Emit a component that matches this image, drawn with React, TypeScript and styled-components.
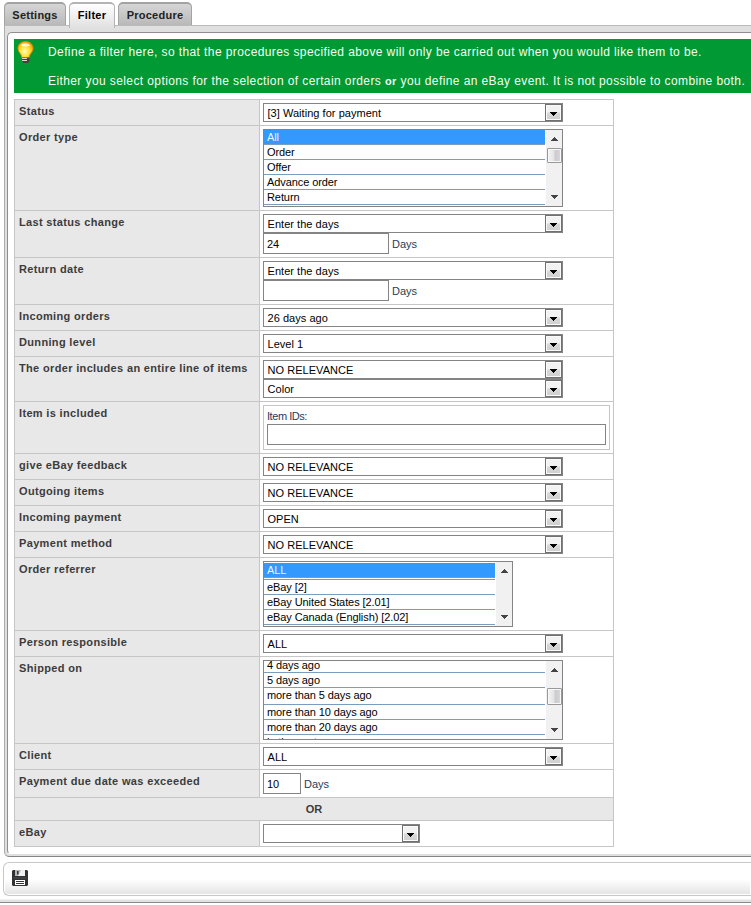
import React from "react";
import styled, { createGlobalStyle, css } from "styled-components";

const GlobalStyle = createGlobalStyle`
  *, *::before, *::after { box-sizing: border-box; }
  html, body { margin: 0; background: #fff; overflow: hidden; }
  body { font-family: "Liberation Sans", Arial, sans-serif; font-size: 11px; line-height: 14px; color: #000; }
`;

const Page = styled.div`
  width: 100vw;
  height: 905px;
  overflow: hidden;
  display: flex;
  flex-direction: column;
`;

const TabBar = styled.nav`
  display: flex;
  align-items: flex-start;
  height: 25px;
  padding: 2px 0 0 4px;
  gap: 3px;
`;

const Tab = styled.button<{ $width: number; $active?: boolean }>`
  display: flex;
  align-items: flex-start;
  justify-content: center;
  width: ${(p) => p.$width}px;
  height: 24px;
  flex: none;
  padding: 4px 0 0;
  border: 1px solid #a3a3a3;
  border-width: 2px 1px 1px;
  border-radius: 5px 5px 0 0;
  background: linear-gradient(#d6d6d6, #b9b9b9);
  font: bold 11px/14px "Liberation Sans", Arial, sans-serif;
  letter-spacing: 0.25px;
  color: #222;
  ${(p) =>
    p.$active &&
    css`
      height: 26px;
      z-index: 1;
      border-color: #b4b4b4;
      border-bottom: 0;
      background: linear-gradient(#ffffff, #e0e0e0);
      color: #000;
    `}
`;

const Frame = styled.main`
  height: 832px;
  flex: none;
  margin-left: 4px;
  padding: 6px 0 3px 2px;
  border: 1px solid #adadad;
  border-top-color: #bbb;
  border-bottom-color: #858585;
  border-right: 0;
  border-radius: 0 0 0 5px;
  background: #e0e0e0;
`;

const Panel = styled.div`
  height: 822px;
  padding: 6px 0 0 6px;
  border: 1px solid #8e8e8e;
  border-right: 0;
  border-bottom-color: #fff;
  border-radius: 5px 0 0 4px;
  background: #fff;
`;

const Hint = styled.section`
  display: flex;
  height: 54px;
  margin-bottom: 6px;
  padding-left: 3px;
  background: #093;
  color: #f2fff2;
  overflow: hidden;

  svg { flex: none; margin-top: 2px; }
`;

const HintText = styled.div`
  display: flex;
  flex-direction: column;
  gap: 15px;
  margin-left: 14px;
  padding-top: 6px;
  font-size: 12px;
  letter-spacing: 0.4px;
  white-space: nowrap;

  p { margin: 0; height: 14px; }
  b { font-size: 11px; }
`;

const Table = styled.div`
  width: 600px;
  border: 1px solid #c6c6c6;
  border-top: 0;
`;

const Row = styled.div`
  display: grid;
  grid-template-columns: 245px 1fr;
  border-top: 1px solid #c6c6c6;
`;

const Label = styled.div`
  padding: 4px 0 0 4px;
  border-right: 1px solid #c6c6c6;
  background: #e8e8e8;
  color: #3c3c3c;
  font-weight: bold;
  letter-spacing: 0.34px;
  white-space: nowrap;
`;

const Field = styled.div`
  display: flex;
  flex-direction: column;
  align-items: flex-start;
  padding: 3px;
`;

const Divider = styled.div`
  height: 23px;
  padding-top: 4px;
  border-top: 1px solid #c6c6c6;
  background: #e8e8e8;
  color: #3c3c3c;
  font-weight: bold;
  text-align: center;
`;

const SelectBox = styled.div<{ $width: number }>`
  display: flex;
  justify-content: space-between;
  width: ${(p) => p.$width}px;
  height: 19px;
  border: 1px solid #848484;
  background: #fff;
`;

const SelectValue = styled.span`
  padding-left: 3.5px;
  line-height: 18px;
  letter-spacing: 0.04px;
  white-space: nowrap;
`;

const SelectButton = styled.span`
  display: flex;
  align-items: center;
  justify-content: center;
  width: 17px;
  height: 17px;
  border: 1px solid #707070;
  box-shadow: inset 0 0 0 1px #fafafa;
  background: linear-gradient(#f2f2f2 45%, #d8d8d8 55%, #cfcfcf);

  svg { margin-top: 2px; }
`;

const ListBox = styled.div<{ $width: number; $height: number }>`
  display: flex;
  width: ${(p) => p.$width}px;
  height: ${(p) => p.$height}px;
  border: 1px solid #848484;
  overflow: hidden;
`;

const Options = styled.div<{ $shift: number }>`
  flex: 1;
  margin-top: ${(p) => p.$shift}px;
`;

const Option = styled.div<{ $selected?: boolean; $extra?: boolean; $tall?: boolean }>`
  height: ${(p) => (p.$tall ? 17 : 15)}px;
  padding-left: 3px;
  border-bottom: 1px solid #7c9cbc;
  letter-spacing: -0.09px;
  white-space: nowrap;
  ${(p) => p.$selected && css`background: #39f; color: #e8f4ff;`}
  ${(p) => p.$extra && css`box-shadow: 0 1px #fff, 0 2px #7c9cbc; margin-bottom: 2px;`}
`;

const ScrollBar = styled.div<{ $before: number }>`
  display: flex;
  flex-direction: column;
  align-items: center;
  width: 17px;
  padding: 7px 0 7px 1px;
  border-left: 1px solid #fff;
  background: #f1f1f1;

  svg:first-child { margin-bottom: ${(p) => p.$before}px; }
  svg:last-child { margin-top: auto; }
`;

const Thumb = styled.div<{ $height: number }>`
  width: 15px;
  height: ${(p) => p.$height}px;
  border: 1px solid #999;
  border-radius: 1px;
  box-shadow: inset 0 0 0 1px #f8f8f8;
  background: linear-gradient(90deg, #f4f4f4, #e4e4e4 45%, #cbcbcf 55%, #d8d8dc);
`;

const InputLine = styled.div`
  display: flex;
  align-items: center;
  gap: 3px;
  color: #24405a;
`;

const TextInput = styled.input<{ $width: number }>`
  width: ${(p) => p.$width}px;
  height: 21px;
  padding: 1px 0 0 3px;
  border: 1px solid #848484;
  border-radius: 0;
  outline: 0;
  background: #fff;
  color: #000;
  font: 11px "Liberation Sans", Arial, sans-serif;
`;

const ItemGroup = styled.div`
  width: 347px;
  height: 45px;
  padding: 3px 3px 0;
  border: 1px solid #c6c6c6;
  color: #24405a;
`;

const Caption = styled.div`
  height: 15px;
  letter-spacing: -0.45px;
`;

const Footer = styled.footer`
  display: flex;
  align-items: flex-start;
  flex: none;
  height: 34px;
  margin: 5px 0 3px 3px;
  padding: 7px 0 0 8px;
  border: 1px solid #c8c8c8;
  border-right: 0;
  border-radius: 6px 0 0 6px;
  background: linear-gradient(#fff 50%, #e3e3e3);
  box-shadow: inset 0 0 0 1px #fff;
`;

const BottomRule = styled.div`
  height: 4px;
  flex: none;
  border-top: 1px solid #f0f0f0;
  border-bottom: 1px solid #8a8a8a;
  background: #e2e2e2;
`;

const Arrow = ({ up, light }: { up?: boolean; light?: boolean }) => (
  <svg width="7" height="4" viewBox="0 0 7 4" shapeRendering="crispEdges">
    {up ? (
      <path d="M3 0h1v1h1v1h1v1h1v1H0V3h1V2h1V1h1z" fill="#444" />
    ) : (
      <path d="M0 0h7v1H6v1H5v1H4v1H3V3H2V2H1V1H0z" fill={light ? "#444" : "#000"} />
    )}
  </svg>
);

const Bulb = () => (
  <svg width="17" height="23" viewBox="0 0 17 23">
    <defs>
      <radialGradient id="glow" cx="45%" cy="60%" r="62%">
        <stop offset="0" stopColor="#fffbc0" />
        <stop offset=".5" stopColor="#ffe23a" />
        <stop offset="1" stopColor="#f79a08" />
      </radialGradient>
    </defs>
    <path d="M8.5.5C3.8.5 1 3.5 1 7.5c0 3.800 3.600 5 4 9.500h7c.4-4.500 4-5.700 4-9.500C16 3.500 13.200.5 8.500.5z" fill="url(#glow)" stroke="#e98605" strokeWidth=".8" />
    <path d="M4 4.500C5 2.200 11 1.800 13 4.500c-2 1.200-7 1.200-9 0z" fill="#fff" opacity=".85" />
    <path d="M5 16.500h7.500v3.500l-1.500 2H6.500L5 20z" fill="#4b3f3a" />
    <path d="M5 17.500h5M5 19.500h5" stroke="#ddd8d4" strokeWidth="1" />
  </svg>
);

const SaveIcon = () => (
  <svg width="16" height="16" viewBox="0 0 16 16">
    <path d="M1 0h14l1 1v14l-1 1H1l-1-1V1z" fill="#303234" />
    <path d="M3 0h10v6H3z" fill="#b4b7b9" />
    <path d="M9 0h4v6H6z" fill="#f0f0f0" />
    <path d="M5 1h1.500v3.500H5z" fill="#303234" />
    <path d="M3 10h10v5H3z" fill="#fff" />
    <path d="M4 11h8v1H4zM4 13h8v1H4z" fill="#303234" />
    <path d="M1.500 8h13" stroke="#4a4d4f" />
  </svg>
);

const Select = ({ value = "", width = 300 }: { value?: string; width?: number }) => (
  <SelectBox $width={width}>
    <SelectValue>{value}</SelectValue>
    <SelectButton><Arrow /></SelectButton>
  </SelectBox>
);

type Item = { text: string; selected?: boolean; extra?: boolean; tall?: boolean };

const List = ({ items, width, height, shift = 0, before = 0, thumb }: {
  items: Item[]; width: number; height: number; shift?: number; before?: number; thumb?: number;
}) => (
  <ListBox $width={width} $height={height}>
    <Options $shift={shift}>
      {items.map((i) => (
        <Option key={i.text} $selected={i.selected} $extra={i.extra} $tall={i.tall}>{i.text}</Option>
      ))}
    </Options>
    <ScrollBar $before={before}>
      <Arrow up />
      {thumb && <Thumb $height={thumb} />}
      <Arrow light />
    </ScrollBar>
  </ListBox>
);

const FormRow = ({ label, children }: { label: string; children: React.ReactNode }) => (
  <Row>
    <Label>{label}</Label>
    <Field>{children}</Field>
  </Row>
);

export default function App() {
  return (
    <Page>
      <GlobalStyle />
      <TabBar>
        <Tab $width={62}>Settings</Tab>
        <Tab $width={46} $active>Filter</Tab>
        <Tab $width={74}>Procedure</Tab>
      </TabBar>
      <Frame>
        <Panel>
          <Hint>
            <Bulb />
            <HintText>
              <p>Define a filter here, so that the procedures specified above will only be carried out when you would like them to be.</p>
              <p>Either you select options for the selection of certain orders <b>or</b> you define an eBay event. It is not possible to combine both.</p>
            </HintText>
          </Hint>
          <Table>
            <FormRow label="Status"><Select value="[3] Waiting for payment" /></FormRow>
            <FormRow label="Order type">
              <List
                width={300} height={78} before={7} thumb={15}
                items={[{ text: "All", selected: true }, { text: "Order" }, { text: "Offer" }, { text: "Advance order" }, { text: "Return" }]}
              />
            </FormRow>
            <FormRow label="Last status change">
              <Select value="Enter the days" />
              <InputLine><TextInput $width={126} defaultValue="24" />Days</InputLine>
            </FormRow>
            <FormRow label="Return date">
              <Select value="Enter the days" />
              <InputLine><TextInput $width={126} />Days</InputLine>
            </FormRow>
            <FormRow label="Incoming orders"><Select value="26 days ago" /></FormRow>
            <FormRow label="Dunning level"><Select value="Level 1" /></FormRow>
            <FormRow label="The order includes an entire line of items">
              <Select value="NO RELEVANCE" />
              <Select value="Color" />
            </FormRow>
            <FormRow label="Item is included">
              <ItemGroup>
                <Caption>Item IDs:</Caption>
                <TextInput $width={339} />
              </ItemGroup>
            </FormRow>
            <FormRow label="give eBay feedback"><Select value="NO RELEVANCE" /></FormRow>
            <FormRow label="Outgoing items"><Select value="NO RELEVANCE" /></FormRow>
            <FormRow label="Incoming payment"><Select value="OPEN" /></FormRow>
            <FormRow label="Payment method"><Select value="NO RELEVANCE" /></FormRow>
            <FormRow label="Order referrer">
              <List
                width={250} height={66} shift={1}
                items={[{ text: "ALL", selected: true, extra: true }, { text: "eBay [2]" }, { text: "eBay United States [2.01]" }, { text: "eBay Canada (English) [2.02]" }]}
              />
            </FormRow>
            <FormRow label="Person responsible"><Select value="ALL" /></FormRow>
            <FormRow label="Shipped on">
              <List
                width={300} height={80} shift={-3} before={16} thumb={17}
                items={[{ text: "4 days ago" }, { text: "5 days ago" }, { text: "more than 5 days ago", tall: true }, { text: "more than 10 days ago" }, { text: "more than 20 days ago" }, { text: "in the past" }]}
              />
            </FormRow>
            <FormRow label="Client"><Select value="ALL" /></FormRow>
            <FormRow label="Payment due date was exceeded">
              <InputLine><TextInput $width={38} defaultValue="10" />Days</InputLine>
            </FormRow>
            <Divider>OR</Divider>
            <FormRow label="eBay"><Select width={157} /></FormRow>
          </Table>
        </Panel>
      </Frame>
      <Footer><SaveIcon /></Footer>
      <BottomRule />
    </Page>
  );
}
